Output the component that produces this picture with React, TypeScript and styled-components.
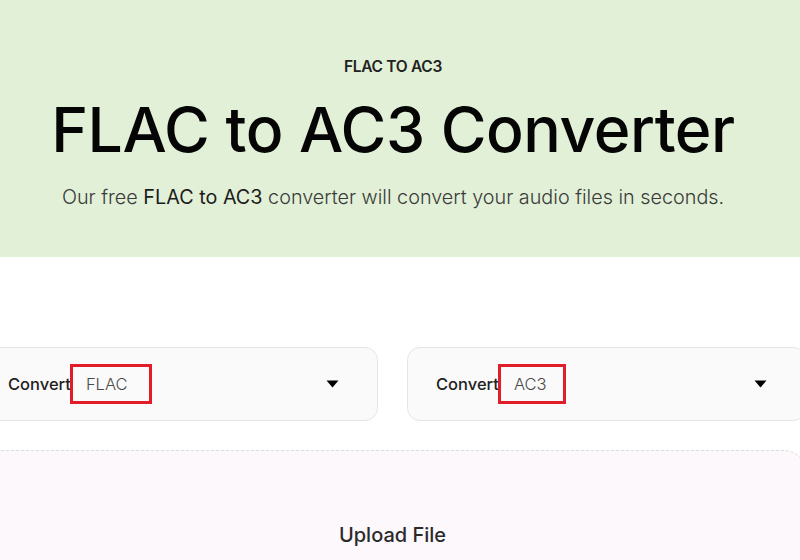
import React from 'react'
import styled, { createGlobalStyle } from 'styled-components'

const GlobalStyle = createGlobalStyle`
  html, body {
    margin: 0;
    padding: 0;
    background: #ffffff;
    overflow: hidden;
  }
  body {
    font-family: "Inter", "Noto Sans", sans-serif;
    color: #1c1c1c;
  }
`

const Page = styled.div`
  width: 800px;
  height: 560px;
  overflow: hidden;
  display: flex;
  flex-direction: column;
`

const Hero = styled.section`
  flex-shrink: 0;
  height: 257px;
  background-color: #e1f0d6;
  display: flex;
  flex-direction: column;
  align-items: center;
  padding: 56px 14px 0 0;
  box-sizing: border-box;
`

const Eyebrow = styled.div`
  font-size: 15.5px;
  font-weight: 600;
  letter-spacing: -0.3px;
  color: #222;
  line-height: 22px;
`

const Title = styled.h1`
  margin: 15px 0 0;
  font-size: 62.5px;
  font-weight: 500;
  line-height: 72px;
  letter-spacing: -0.5px;
  color: #050505;
`

const Sub = styled.p`
  margin: 20px 0 0;
  font-size: 19.8px;
  font-weight: 300;
  line-height: 24px;
  color: #3a3a3a;
  b {
    font-weight: 400;
    color: #1c1c1c;
  }
`

const Main = styled.section`
  flex-shrink: 0;
  padding-top: 90px;
  display: flex;
  flex-direction: column;
  margin-left: -21px;
  width: 827px;
  gap: 29px;
`

const Row = styled.div`
  display: flex;
  gap: 29px;
`

const Select = styled.div`
  flex: 1;
  height: 74px;
  box-sizing: border-box;
  background: #fafafa;
  border: 1px solid #e6e6e6;
  border-radius: 13px;
  display: flex;
  align-items: center;
  padding: 0 38px 0 28px;
`

const Label = styled.span`
  font-size: 16.5px;
  font-weight: 500;
  color: #222;
`

const Value = styled.span<{ $w: number }>`
  display: inline-flex;
  align-items: center;
  width: ${p => p.$w}px;
  height: 40px;
  box-sizing: border-box;
  border: 3px solid #e21d2a;
  padding-left: 13px;
  margin-left: -1px;
  font-size: 16.5px;
  font-weight: 300;
  color: #4a4a4a;
`

const Caret = styled.svg`
  margin-left: auto;
  width: 13px;
  height: 8px;
`

const Upload = styled.div`
  height: 200px;
  background: #fdf8fc;
  border: 1px dashed #dcdcdc;
  border-radius: 22px;
  display: flex;
  justify-content: center;
  padding-top: 72px;
  box-sizing: border-box;
`

const UploadText = styled.span`
  font-size: 20px;
  font-weight: 500;
  color: #2a2a2a;
`

const Convert = ({ value, w }: { value: string; w: number }) => (
  <Select>
    <Label>Convert</Label>
    <Value $w={w}>{value}</Value>
    <Caret viewBox="0 0 13 8">
      <path d="M0.5 0.5 H12.5 L6.5 7.5 Z" fill="#000" />
    </Caret>
  </Select>
)

export default function App() {
  return (
    <Page>
      <GlobalStyle />
      <Hero>
        <Eyebrow>FLAC TO AC3</Eyebrow>
        <Title>FLAC to AC3 Converter</Title>
        <Sub>
          Our free <b>FLAC to AC3</b> converter will convert your audio files in seconds.
        </Sub>
      </Hero>
      <Main>
        <Row>
          <Convert value="FLAC" w={82} />
          <Convert value="AC3" w={68} />
        </Row>
        <Upload>
          <UploadText>Upload File</UploadText>
        </Upload>
      </Main>
    </Page>
  )
}
